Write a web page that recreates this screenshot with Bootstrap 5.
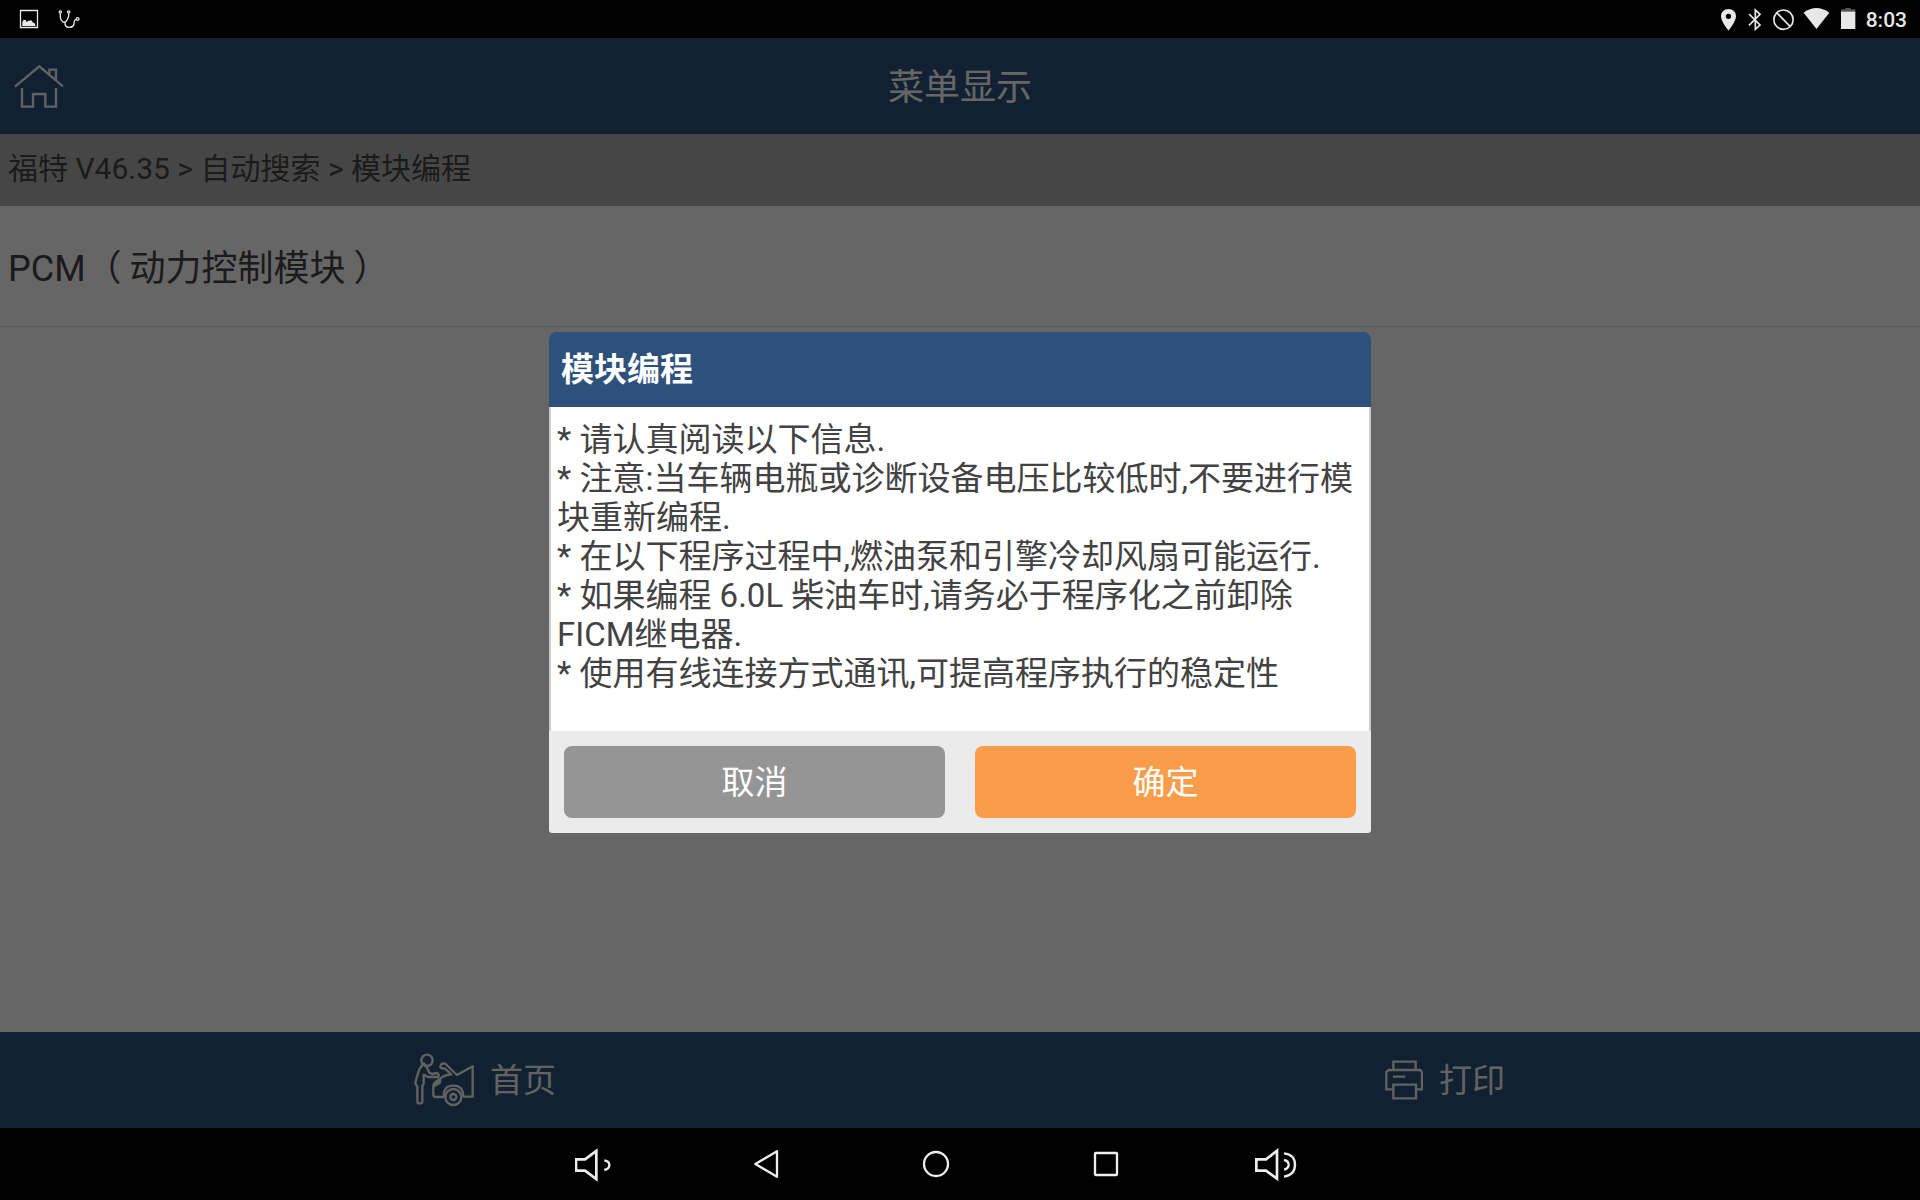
<!DOCTYPE html>
<html lang="zh-CN">
<head>
<meta charset="utf-8">
<meta name="viewport" content="width=device-width, initial-scale=1">
<title>菜单显示</title>
<link href="https://cdn.jsdelivr.net/npm/bootstrap@5.3.0/dist/css/bootstrap.min.css" rel="stylesheet">
<style>
  body { font-family: Roboto, "Noto Sans CJK SC", sans-serif; font-size: 33px; line-height: 39px; color: #444; background: #fff; }
  svg { display: block; flex: none; }
  .line-art { fill: none; stroke: currentColor; }
  .status-bar { height: 38px; background: #000; color: #e8e8e8; padding: 2px 13px 0 16px; }
  .status-time { font-size: 21px; font-weight: 500; line-height: 24px; margin-left: 4px; }
  .app-bar { background: #2d547c; color: #fff; height: 96px; }
  .app-title { font-size: 36px; line-height: 48px; padding-top: 4px; }
  .home-link { left: 12px; color: #f0f8ff; }
  .crumb-bar { background: #b0b0b0; font-size: 30px; line-height: 36px; padding: 17px 8px 19px; }
  .menu-row { font-size: 36px; line-height: 48px; padding: 39px 8px 33px; border-bottom: 1px solid #e2e2e2; color: #444; }
  .paren-open { margin-right: 8px; }
  .paren-close { margin-left: 8px; }
  .foot-item { padding-left: 10px; color: #f4f4f4; }
  .scrim { background: rgba(0, 0, 0, .6); padding-bottom: 1px; }
  .dialog-box { width: 822px; max-width: 100%; border-radius: 8px 8px 3px 3px; overflow: hidden; }
  .dialog-head { background: #2e517c; color: #fff; padding: 18px 12px; }
  .dialog-title { font-size: 33px; line-height: 39px; }
  .dialog-text { background: #fff; border: solid #ccc; border-width: 0 2px; padding: 13px 6px 38px; color: #424242; }
  .dialog-foot { background: #ebebeb; padding: 15px; gap: 30px; }
  .btn-dialog { --bs-btn-color: #fff; --bs-btn-hover-color: #fff; font-size: 33px; line-height: 40px; padding: 17px 12px 15px; border: 0; border-radius: 8px; }
  .btn-cancel { --bs-btn-bg: #959595; --bs-btn-hover-bg: #858585; }
  .btn-ok { --bs-btn-bg: #fa9d4b; --bs-btn-hover-bg: #e98c3a; }
  .sys-nav { height: 72px; background: #000; padding-right: 48px; }
  .sys-key { width: 170px; color: #eee; }
</style>
<script src="https://cdn.jsdelivr.net/npm/bootstrap@5.3.0/dist/js/bootstrap.bundle.min.js"></script>
</head>
<body class="vh-100 d-flex flex-column">

<div class="status-bar d-flex align-items-center justify-content-between">
  <div class="d-flex">
    <svg width="30" height="24" viewBox="48 24 90 72"><path d="M61.500 31.500h51v51h-51z" class="line-art" stroke-width="4"/><path d="M67 78V66l4-7 6 1 3 6 6-4 8-1 3 5 7 4 3 8z" fill="currentColor"/></svg>
    <svg width="36" height="24" viewBox="138 24 108 72"><g class="line-art" stroke-width="4"><circle cx="181" cy="36" r="3.500"/><circle cx="206" cy="36" r="3.500"/><circle cx="233" cy="57" r="4"/><path d="M181 40v13q1 7 8 13 3 2 8-1 10-9 9-25M195 66q-1 16 12 16 13 0 15-10 0-13 7-14"/></g></svg>
  </div>
  <div class="d-flex align-items-center">
    <svg width="22" height="24" viewBox="60 24 66 72"><path fill="currentColor" fill-rule="evenodd" d="M85.500 27C73 27 63 36 63 49c0 16 22.500 43 22.500 43S108 65 108 49c0-13-10-22-22.500-22zm0 14a8 8 0 1 1 0 16 8 8 0 0 1 0-16z"/></svg>
    <svg width="25" height="24" viewBox="126 24 75 72"><path class="line-art" stroke-width="5" d="M147 42l33 33-14 13V30l14 13-33 33"/></svg>
    <svg width="32" height="24" viewBox="201 24 96 72"><g class="line-art" stroke-width="5"><circle cx="250.500" cy="59" r="29"/><path d="M230 38l41 42"/></g></svg>
    <svg width="36" height="24" viewBox="297 24 108 72"><path fill="currentColor" d="M311 38q38-28 77 0l-38.500 49z"/></svg>
    <svg width="27" height="24" viewBox="405 24 81 72"><path fill="#555" d="M436 24h16v4h14v8h-43v-8h13z"/><path fill="currentColor" d="M423 35h43v52h-43z"/></svg>
    <span class="status-time">8:03</span>
  </div>
</div>

<div class="position-relative flex-grow-1 d-flex flex-column">
  <header class="app-bar position-relative d-flex align-items-center justify-content-center">
    <a href="#" class="home-link position-absolute" aria-label="首页">
      <svg width="54" height="50" viewBox="36 182 162 150"><path class="line-art" stroke-width="7" d="M45 259l73-61 71 60M148 221v-13h20v32M66 263v56h33v-38h37v38h32v-56"/></svg>
    </a>
    <h1 class="app-title fw-normal m-0">菜单显示</h1>
  </header>
  <nav class="crumb-bar">福特 V46.35 &gt; 自动搜索 &gt; 模块编程</nav>
  <main class="flex-grow-1">
    <a href="#" class="menu-row d-block text-decoration-none">PCM<span class="paren-open">（</span>动力控制模块<span class="paren-close">）</span></a>
  </main>
  <footer class="app-bar d-flex">
    <a href="#" class="foot-item col-6 d-flex align-items-center justify-content-center text-decoration-none">
      <svg class="me-3" width="60" height="54" viewBox="75 98 180 162"><g class="line-art" stroke-width="7" stroke-linejoin="round"><circle cx="114" cy="120" r="17"/><path d="M101 133L92 145 84 168l-5 20 6 12v44q0 5 6 5h4q5 0 5-6v-46l4-7v-27l14 7h29q6-7-3-12l-15 3-8-4-10-21q-7-10-12-7"/><path d="M165 230h-27q-5-1-5-8v-22q0-10 8-16l20-15q12-6 26-7l-20-18q-9 2-13-3 0-12 11-12 5 0 11 8l28 27 47-26v91h-29"/><path d="M134 196l20-17-2 9-18 10M165 229q-3-33 28-33t29 33"/><circle cx="193" cy="230" r="24"/><circle cx="193" cy="230" r="9"/></g></svg>
      <span>首页</span>
    </a>
    <a href="#" class="foot-item col-6 d-flex align-items-center justify-content-center text-decoration-none">
      <svg class="me-3" width="38" height="42" viewBox="77 117 114 126"><g class="line-art" stroke-width="7"><path d="M102 149v-24h67v24M101 208H81v-52l7-6h95l5 6v52h-18M101 170h37"/><path d="M102 194h68v41h-68z"/></g></svg>
      <span>打印</span>
    </a>
  </footer>

  <div class="scrim position-absolute top-0 start-0 w-100 h-100 d-flex align-items-center justify-content-center">
    <section class="dialog-box" role="dialog" aria-labelledby="dialogTitle">
      <div class="dialog-head"><h2 id="dialogTitle" class="dialog-title fw-bold m-0">模块编程</h2></div>
      <div class="dialog-text">
        <p class="m-0">* 请认真阅读以下信息.</p>
        <p class="m-0">* 注意:当车辆电瓶或诊断设备电压比较低时,不要进行模块重新编程.</p>
        <p class="m-0">* 在以下程序过程中,燃油泵和引擎冷却风扇可能运行.</p>
        <p class="m-0">* 如果编程 6.0L 柴油车时,请务必于程序化之前卸除FICM继电器.</p>
        <p class="m-0">* 使用有线连接方式通讯,可提高程序执行的稳定性</p>
      </div>
      <div class="dialog-foot d-flex">
        <button type="button" class="btn btn-dialog btn-cancel flex-fill">取消</button>
        <button type="button" class="btn btn-dialog btn-ok flex-fill">确定</button>
      </div>
    </section>
  </div>
</div>

<nav class="sys-nav d-flex align-items-center justify-content-center" aria-label="系统导航">
  <button type="button" class="sys-key btn border-0 d-flex justify-content-center" aria-label="音量减"><svg width="42" height="36" viewBox="76 78 126 108"><path class="line-art" stroke-width="8" d="M79 118h27l34-25v84l-34-25H79z"/><path class="line-art" stroke-width="7" d="M164 121q15 2 15 14t-15 15"/></svg></button>
  <button type="button" class="sys-key btn border-0 d-flex justify-content-center" aria-label="返回"><svg width="30" height="36" viewBox="602 78 90 108"><path class="line-art" stroke-width="7" stroke-linejoin="round" d="M615 132l65-38v76z"/></svg></button>
  <button type="button" class="sys-key btn border-0 d-flex justify-content-center" aria-label="主屏幕"><svg width="30" height="36" viewBox="3 78 90 108"><circle class="line-art" stroke-width="7" cx="48" cy="132" r="36"/></svg></button>
  <button type="button" class="sys-key btn border-0 d-flex justify-content-center" aria-label="最近任务"><svg width="30" height="36" viewBox="513 78 90 108"><rect class="line-art" stroke-width="7" stroke-linejoin="round" x="525" y="99" width="66" height="66" rx="2"/></svg></button>
  <button type="button" class="sys-key btn border-0 d-flex justify-content-center" aria-label="音量加"><svg width="44" height="36" viewBox="1002 78 132 108"><path class="line-art" stroke-width="8" d="M1009 118h29l33-26v84l-33-24h-29z"/><path class="line-art" stroke-width="7" d="M1092 120q14 3 14 14t-14 15M1092 100q33 4 33 34t-33 36"/></svg></button>
</nav>
</body>
</html>
